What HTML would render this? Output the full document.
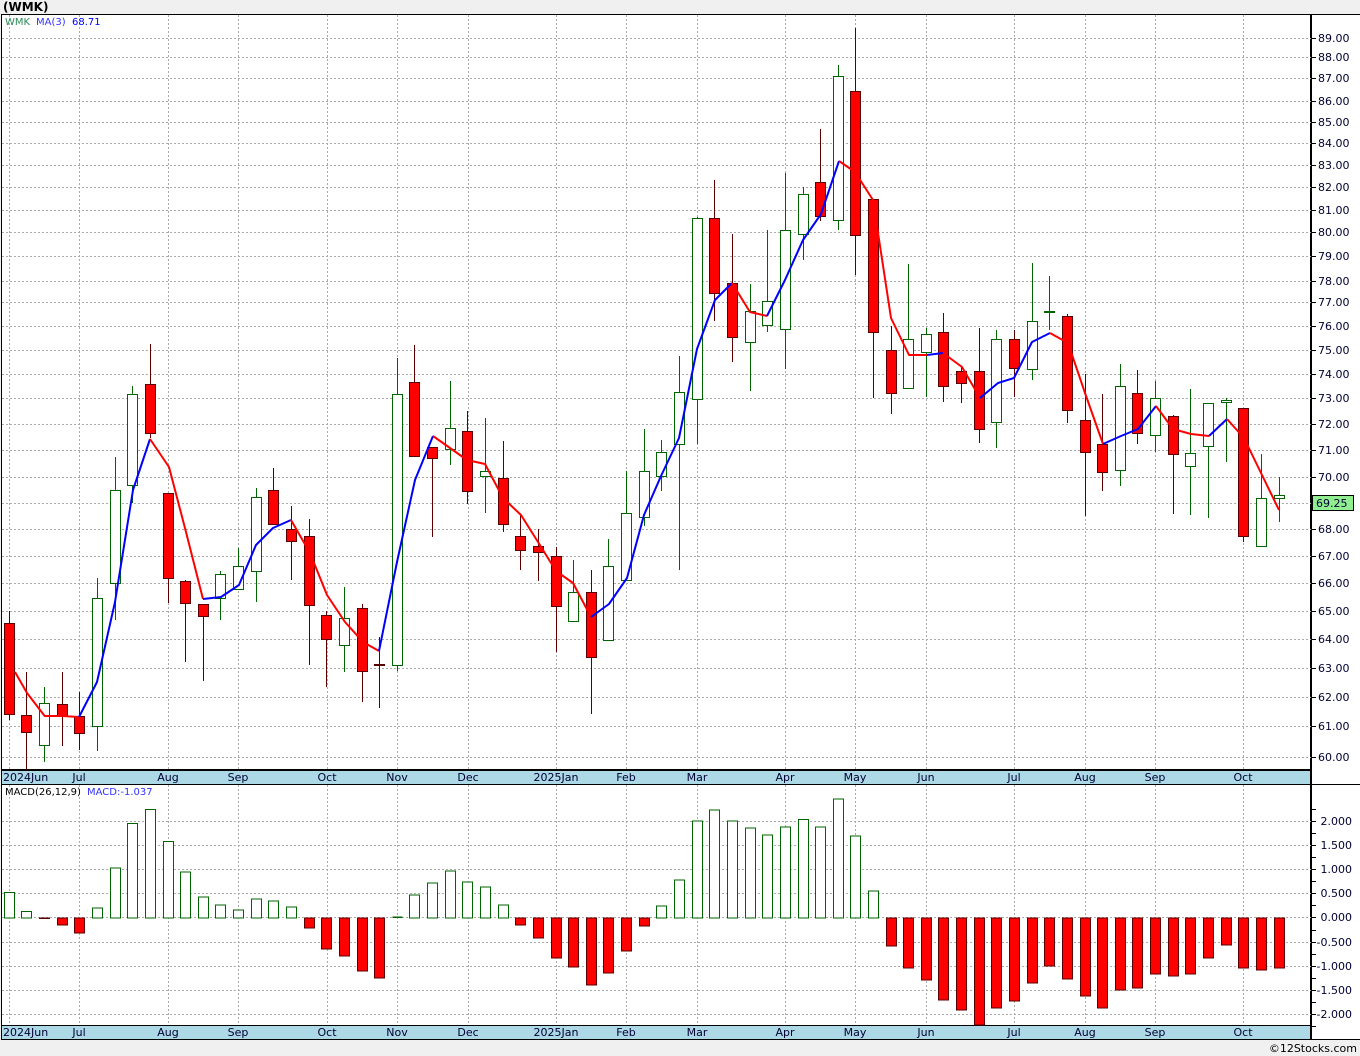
<!DOCTYPE html>
<html><head><meta charset="utf-8"><style>
html,body{margin:0;padding:0;background:#f0f0f0;}
svg{display:block;font-family:"DejaVu Sans","Liberation Sans",sans-serif;}
.ax{font-size:11px;fill:#000033;}
.gr{stroke:#aaa;stroke-width:1;stroke-dasharray:2,2;}
.r{fill:#ff0000;stroke:#5a0000;}
.g{fill:#fff;stroke:#006400;}
.wr{stroke:#5a0000;}
.wg{stroke:#006400;}
</style></head><body>
<svg width="1360" height="1056" viewBox="0 0 1360 1056" xmlns="http://www.w3.org/2000/svg">
<rect x="0" y="0" width="1360" height="1056" fill="#f0f0f0"/>
<text x="3" y="11" font-size="12" font-weight="bold" fill="#000">(WMK)</text>
<rect x="1.5" y="14.5" width="1309" height="755" fill="#fff" stroke="#000"/>
<rect x="1311" y="14.5" width="49" height="1025" fill="#fff"/>
<line x1="1311.5" y1="14" x2="1311.5" y2="1040" stroke="#000"/>
<line x1="1311" y1="14.5" x2="1360" y2="14.5" stroke="#000"/>
<g class="gr">
<line x1="2" y1="38.5" x2="1311" y2="38.5"/><line x1="2" y1="57.5" x2="1311" y2="57.5"/><line x1="2" y1="78.5" x2="1311" y2="78.5"/><line x1="2" y1="101.5" x2="1311" y2="101.5"/><line x1="2" y1="122.5" x2="1311" y2="122.5"/><line x1="2" y1="143.5" x2="1311" y2="143.5"/><line x1="2" y1="165.5" x2="1311" y2="165.5"/><line x1="2" y1="187.5" x2="1311" y2="187.5"/><line x1="2" y1="210.5" x2="1311" y2="210.5"/><line x1="2" y1="232.5" x2="1311" y2="232.5"/><line x1="2" y1="256.5" x2="1311" y2="256.5"/><line x1="2" y1="281.5" x2="1311" y2="281.5"/><line x1="2" y1="302.5" x2="1311" y2="302.5"/><line x1="2" y1="326.5" x2="1311" y2="326.5"/><line x1="2" y1="350.5" x2="1311" y2="350.5"/><line x1="2" y1="374.5" x2="1311" y2="374.5"/><line x1="2" y1="398.5" x2="1311" y2="398.5"/><line x1="2" y1="424.5" x2="1311" y2="424.5"/><line x1="2" y1="450.5" x2="1311" y2="450.5"/><line x1="2" y1="477.5" x2="1311" y2="477.5"/><line x1="2" y1="503.5" x2="1311" y2="503.5"/><line x1="2" y1="529.5" x2="1311" y2="529.5"/><line x1="2" y1="556.5" x2="1311" y2="556.5"/><line x1="2" y1="583.5" x2="1311" y2="583.5"/><line x1="2" y1="611.5" x2="1311" y2="611.5"/><line x1="2" y1="639.5" x2="1311" y2="639.5"/><line x1="2" y1="668.5" x2="1311" y2="668.5"/><line x1="2" y1="697.5" x2="1311" y2="697.5"/><line x1="2" y1="726.5" x2="1311" y2="726.5"/><line x1="2" y1="757.5" x2="1311" y2="757.5"/>
<line x1="9.5" y1="15" x2="9.5" y2="770"/><line x1="79.5" y1="15" x2="79.5" y2="770"/><line x1="168.5" y1="15" x2="168.5" y2="770"/><line x1="238.5" y1="15" x2="238.5" y2="770"/><line x1="327.5" y1="15" x2="327.5" y2="770"/><line x1="397.5" y1="15" x2="397.5" y2="770"/><line x1="468.5" y1="15" x2="468.5" y2="770"/><line x1="556.5" y1="15" x2="556.5" y2="770"/><line x1="626.5" y1="15" x2="626.5" y2="770"/><line x1="697.5" y1="15" x2="697.5" y2="770"/><line x1="785.5" y1="15" x2="785.5" y2="770"/><line x1="855.5" y1="15" x2="855.5" y2="770"/><line x1="926.5" y1="15" x2="926.5" y2="770"/><line x1="1014.5" y1="15" x2="1014.5" y2="770"/><line x1="1085.5" y1="15" x2="1085.5" y2="770"/><line x1="1155.5" y1="15" x2="1155.5" y2="770"/><line x1="1243.5" y1="15" x2="1243.5" y2="770"/>
</g>
<text x="5" y="25" font-size="10" fill="#2e8b57">WMK</text>
<text x="36" y="25" font-size="10" fill="#3333ff">MA(3)</text>
<text x="72" y="25" font-size="10" fill="#0000ff">68.71</text>
<g stroke="#000"><line x1="1311" y1="38.5" x2="1316" y2="38.5"/><line x1="1311" y1="57.5" x2="1316" y2="57.5"/><line x1="1311" y1="78.5" x2="1316" y2="78.5"/><line x1="1311" y1="101.5" x2="1316" y2="101.5"/><line x1="1311" y1="122.5" x2="1316" y2="122.5"/><line x1="1311" y1="143.5" x2="1316" y2="143.5"/><line x1="1311" y1="165.5" x2="1316" y2="165.5"/><line x1="1311" y1="187.5" x2="1316" y2="187.5"/><line x1="1311" y1="210.5" x2="1316" y2="210.5"/><line x1="1311" y1="232.5" x2="1316" y2="232.5"/><line x1="1311" y1="256.5" x2="1316" y2="256.5"/><line x1="1311" y1="281.5" x2="1316" y2="281.5"/><line x1="1311" y1="302.5" x2="1316" y2="302.5"/><line x1="1311" y1="326.5" x2="1316" y2="326.5"/><line x1="1311" y1="350.5" x2="1316" y2="350.5"/><line x1="1311" y1="374.5" x2="1316" y2="374.5"/><line x1="1311" y1="398.5" x2="1316" y2="398.5"/><line x1="1311" y1="424.5" x2="1316" y2="424.5"/><line x1="1311" y1="450.5" x2="1316" y2="450.5"/><line x1="1311" y1="477.5" x2="1316" y2="477.5"/><line x1="1311" y1="529.5" x2="1316" y2="529.5"/><line x1="1311" y1="556.5" x2="1316" y2="556.5"/><line x1="1311" y1="583.5" x2="1316" y2="583.5"/><line x1="1311" y1="611.5" x2="1316" y2="611.5"/><line x1="1311" y1="639.5" x2="1316" y2="639.5"/><line x1="1311" y1="668.5" x2="1316" y2="668.5"/><line x1="1311" y1="697.5" x2="1316" y2="697.5"/><line x1="1311" y1="726.5" x2="1316" y2="726.5"/><line x1="1311" y1="757.5" x2="1316" y2="757.5"/></g>
<g class="ax">
<text x="1318" y="42">89.00</text><text x="1318" y="61">88.00</text><text x="1318" y="82">87.00</text><text x="1318" y="105">86.00</text><text x="1318" y="126">85.00</text><text x="1318" y="147">84.00</text><text x="1318" y="169">83.00</text><text x="1318" y="191">82.00</text><text x="1318" y="214">81.00</text><text x="1318" y="236">80.00</text><text x="1318" y="260">79.00</text><text x="1318" y="285">78.00</text><text x="1318" y="306">77.00</text><text x="1318" y="330">76.00</text><text x="1318" y="354">75.00</text><text x="1318" y="378">74.00</text><text x="1318" y="402">73.00</text><text x="1318" y="428">72.00</text><text x="1318" y="454">71.00</text><text x="1318" y="481">70.00</text><text x="1318" y="533">68.00</text><text x="1318" y="560">67.00</text><text x="1318" y="587">66.00</text><text x="1318" y="615">65.00</text><text x="1318" y="643">64.00</text><text x="1318" y="672">63.00</text><text x="1318" y="701">62.00</text><text x="1318" y="730">61.00</text><text x="1318" y="761">60.00</text>
</g>
<rect x="1312.5" y="495.5" width="41" height="15" fill="#90ee90" stroke="#000"/>
<text x="1316" y="507" class="ax">69.25</text>
<g stroke-width="1">
<line class="wr" x1="9.5" y1="611" x2="9.5" y2="720"/><rect class="r" x="4.5" y="623.5" width="10" height="91"/>
<line class="wr" x1="26.5" y1="672" x2="26.5" y2="770"/><rect class="r" x="21.5" y="715.5" width="10" height="17"/>
<line class="wg" x1="44.5" y1="687" x2="44.5" y2="762"/><rect class="g" x="39.5" y="703.5" width="10" height="42"/>
<line class="wr" x1="62.5" y1="672" x2="62.5" y2="746"/><rect class="r" x="57.5" y="704.5" width="10" height="12"/>
<line class="wr" x1="79.5" y1="692" x2="79.5" y2="750"/><rect class="r" x="74.5" y="716.5" width="10" height="17"/>
<line class="wg" x1="97.5" y1="578" x2="97.5" y2="751"/><rect class="g" x="92.5" y="598.5" width="10" height="128"/>
<line class="wg" x1="115.5" y1="457" x2="115.5" y2="620"/><rect class="g" x="110.5" y="490.5" width="10" height="93"/>
<line class="wg" x1="132.5" y1="386" x2="132.5" y2="503"/><rect class="g" x="127.5" y="394.5" width="10" height="91"/>
<line class="wr" x1="150.5" y1="344" x2="150.5" y2="438"/><rect class="r" x="145.5" y="384.5" width="10" height="49"/>
<line class="wr" x1="168.5" y1="493" x2="168.5" y2="603"/><rect class="r" x="163.5" y="493.5" width="10" height="85"/>
<line class="wr" x1="185.5" y1="580" x2="185.5" y2="662"/><rect class="r" x="180.5" y="581.5" width="10" height="22"/>
<line class="wr" x1="203.5" y1="604" x2="203.5" y2="681"/><rect class="r" x="198.5" y="604.5" width="10" height="12"/>
<line class="wg" x1="220.5" y1="571" x2="220.5" y2="620"/><rect class="g" x="215.5" y="574.5" width="10" height="24"/>
<line class="wg" x1="238.5" y1="548" x2="238.5" y2="589"/><rect class="g" x="233.5" y="566.5" width="10" height="23"/>
<line class="wg" x1="256.5" y1="488" x2="256.5" y2="602"/><rect class="g" x="251.5" y="497.5" width="10" height="74"/>
<line class="wr" x1="273.5" y1="468" x2="273.5" y2="524"/><rect class="r" x="268.5" y="490.5" width="10" height="34"/>
<line class="wr" x1="291.5" y1="506" x2="291.5" y2="580"/><rect class="r" x="286.5" y="529.5" width="10" height="12"/>
<line class="wr" x1="309.5" y1="519" x2="309.5" y2="665"/><rect class="r" x="304.5" y="536.5" width="10" height="69"/>
<line class="wr" x1="326.5" y1="611" x2="326.5" y2="687"/><rect class="r" x="321.5" y="615.5" width="10" height="24"/>
<line class="wg" x1="344.5" y1="587" x2="344.5" y2="672"/><rect class="g" x="339.5" y="618.5" width="10" height="27"/>
<line class="wr" x1="362.5" y1="604" x2="362.5" y2="702"/><rect class="r" x="357.5" y="608.5" width="10" height="63"/>
<line class="wr" x1="379.5" y1="637" x2="379.5" y2="708"/><rect class="r" x="374.5" y="664.5" width="10" height="1"/>
<line class="wg" x1="397.5" y1="358" x2="397.5" y2="671"/><rect class="g" x="392.5" y="394.5" width="10" height="271"/>
<line class="wr" x1="414.5" y1="345" x2="414.5" y2="456"/><rect class="r" x="409.5" y="382.5" width="10" height="74"/>
<line class="wr" x1="432.5" y1="447" x2="432.5" y2="537"/><rect class="r" x="427.5" y="447.5" width="10" height="11"/>
<line class="wg" x1="450.5" y1="381" x2="450.5" y2="465"/><rect class="g" x="445.5" y="428.5" width="10" height="21"/>
<line class="wr" x1="467.5" y1="411" x2="467.5" y2="504"/><rect class="r" x="462.5" y="431.5" width="10" height="60"/>
<line class="wg" x1="485.5" y1="418" x2="485.5" y2="513"/><rect class="g" x="480.5" y="471.5" width="10" height="5"/>
<line class="wr" x1="503.5" y1="441" x2="503.5" y2="532"/><rect class="r" x="498.5" y="478.5" width="10" height="46"/>
<line class="wr" x1="520.5" y1="515" x2="520.5" y2="570"/><rect class="r" x="515.5" y="536.5" width="10" height="14"/>
<line class="wr" x1="538.5" y1="529" x2="538.5" y2="581"/><rect class="r" x="533.5" y="546.5" width="10" height="6"/>
<line class="wr" x1="556.5" y1="547" x2="556.5" y2="652"/><rect class="r" x="551.5" y="556.5" width="10" height="50"/>
<line class="wg" x1="573.5" y1="560" x2="573.5" y2="621"/><rect class="g" x="568.5" y="592.5" width="10" height="29"/>
<line class="wr" x1="591.5" y1="570" x2="591.5" y2="714"/><rect class="r" x="586.5" y="592.5" width="10" height="65"/>
<line class="wg" x1="608.5" y1="539" x2="608.5" y2="640"/><rect class="g" x="603.5" y="566.5" width="10" height="74"/>
<line class="wg" x1="626.5" y1="471" x2="626.5" y2="580"/><rect class="g" x="621.5" y="513.5" width="10" height="67"/>
<line class="wg" x1="644.5" y1="429" x2="644.5" y2="526"/><rect class="g" x="639.5" y="471.5" width="10" height="46"/>
<line class="wg" x1="661.5" y1="440" x2="661.5" y2="491"/><rect class="g" x="656.5" y="452.5" width="10" height="24"/>
<line class="wg" x1="679.5" y1="356" x2="679.5" y2="570"/><rect class="g" x="674.5" y="392.5" width="10" height="52"/>
<line class="wg" x1="697.5" y1="217" x2="697.5" y2="444"/><rect class="g" x="692.5" y="218.5" width="10" height="181"/>
<line class="wr" x1="714.5" y1="180" x2="714.5" y2="321"/><rect class="r" x="709.5" y="218.5" width="10" height="75"/>
<line class="wr" x1="732.5" y1="234" x2="732.5" y2="362"/><rect class="r" x="727.5" y="283.5" width="10" height="54"/>
<line class="wg" x1="750.5" y1="284" x2="750.5" y2="391"/><rect class="g" x="745.5" y="311.5" width="10" height="31"/>
<line class="wg" x1="767.5" y1="230" x2="767.5" y2="332"/><rect class="g" x="762.5" y="301.5" width="10" height="24"/>
<line class="wg" x1="785.5" y1="173" x2="785.5" y2="369"/><rect class="g" x="780.5" y="230.5" width="10" height="99"/>
<line class="wg" x1="803.5" y1="187" x2="803.5" y2="260"/><rect class="g" x="798.5" y="194.5" width="10" height="40"/>
<line class="wr" x1="820.5" y1="129" x2="820.5" y2="221"/><rect class="r" x="815.5" y="182.5" width="10" height="34"/>
<line class="wg" x1="838.5" y1="65" x2="838.5" y2="230"/><rect class="g" x="833.5" y="76.5" width="10" height="144"/>
<line class="wr" x1="855.5" y1="28" x2="855.5" y2="275"/><rect class="r" x="850.5" y="91.5" width="10" height="144"/>
<line class="wr" x1="873.5" y1="199" x2="873.5" y2="398"/><rect class="r" x="868.5" y="199.5" width="10" height="133"/>
<line class="wr" x1="891.5" y1="326" x2="891.5" y2="414"/><rect class="r" x="886.5" y="350.5" width="10" height="43"/>
<line class="wg" x1="908.5" y1="264" x2="908.5" y2="388"/><rect class="g" x="903.5" y="339.5" width="10" height="49"/>
<line class="wg" x1="926.5" y1="328" x2="926.5" y2="397"/><rect class="g" x="921.5" y="334.5" width="10" height="18"/>
<line class="wr" x1="943.5" y1="313" x2="943.5" y2="402"/><rect class="r" x="938.5" y="332.5" width="10" height="54"/>
<line class="wr" x1="961.5" y1="366" x2="961.5" y2="403"/><rect class="r" x="956.5" y="371.5" width="10" height="12"/>
<line class="wr" x1="979.5" y1="328" x2="979.5" y2="443"/><rect class="r" x="974.5" y="371.5" width="10" height="58"/>
<line class="wg" x1="996.5" y1="330" x2="996.5" y2="448"/><rect class="g" x="991.5" y="339.5" width="10" height="83"/>
<line class="wr" x1="1014.5" y1="330" x2="1014.5" y2="397"/><rect class="r" x="1009.5" y="339.5" width="10" height="29"/>
<line class="wg" x1="1032.5" y1="263" x2="1032.5" y2="380"/><rect class="g" x="1027.5" y="321.5" width="10" height="48"/>
<line class="wg" x1="1049.5" y1="276" x2="1049.5" y2="330"/><rect class="g" x="1044.5" y="311.5" width="10" height="1"/>
<line class="wr" x1="1067.5" y1="314" x2="1067.5" y2="423"/><rect class="r" x="1062.5" y="316.5" width="10" height="94"/>
<line class="wr" x1="1085.5" y1="374" x2="1085.5" y2="516"/><rect class="r" x="1080.5" y="420.5" width="10" height="32"/>
<line class="wr" x1="1102.5" y1="394" x2="1102.5" y2="491"/><rect class="r" x="1097.5" y="444.5" width="10" height="28"/>
<line class="wg" x1="1120.5" y1="364" x2="1120.5" y2="486"/><rect class="g" x="1115.5" y="386.5" width="10" height="84"/>
<line class="wr" x1="1137.5" y1="370" x2="1137.5" y2="444"/><rect class="r" x="1132.5" y="393.5" width="10" height="40"/>
<line class="wg" x1="1155.5" y1="381" x2="1155.5" y2="452"/><rect class="g" x="1150.5" y="398.5" width="10" height="37"/>
<line class="wr" x1="1173.5" y1="415" x2="1173.5" y2="514"/><rect class="r" x="1168.5" y="416.5" width="10" height="38"/>
<line class="wg" x1="1190.5" y1="389" x2="1190.5" y2="515"/><rect class="g" x="1185.5" y="453.5" width="10" height="13"/>
<line class="wg" x1="1208.5" y1="403" x2="1208.5" y2="518"/><rect class="g" x="1203.5" y="403.5" width="10" height="43"/>
<line class="wg" x1="1226.5" y1="398" x2="1226.5" y2="462"/><rect class="g" x="1221.5" y="400.5" width="10" height="2"/>
<line class="wr" x1="1243.5" y1="408" x2="1243.5" y2="542"/><rect class="r" x="1238.5" y="408.5" width="10" height="128"/>
<line class="wg" x1="1261.5" y1="454" x2="1261.5" y2="546"/><rect class="g" x="1256.5" y="498.5" width="10" height="48"/>
<line class="wg" x1="1279.5" y1="477" x2="1279.5" y2="522"/><rect class="g" x="1274.5" y="495.5" width="10" height="3"/>
</g>
<g fill="none" stroke-width="2" stroke-linejoin="round">
<polyline stroke="#ff0000" points="15,672 27,693 44.7,716 62,716 79,717"/>
<polyline stroke="#0000ff" points="79,717 97,682 115,602 133,490 150,439"/>
<polyline stroke="#ff0000" points="150,439 169,467 186,532 203,599"/>
<polyline stroke="#0000ff" points="203,599 221,597 239,585 256,545 273,528 291,520"/>
<polyline stroke="#ff0000" points="291,520 310,553 327,595 345,622 363,642 379,651"/>
<polyline stroke="#0000ff" points="379,651 397,562 415,480 433,436"/>
<polyline stroke="#ff0000" points="433,436 450,448 467,460 485,464 503,498 521,515 538,542 556,571 573,583 591,617"/>
<polyline stroke="#0000ff" points="591,617 609,604 627,578 644,515 661,476 679,438 697,349 715,300 732,283"/>
<polyline stroke="#ff0000" points="732,283 750,312 767,316"/>
<polyline stroke="#0000ff" points="767,316 785,280 803,240 821,214 839,161"/>
<polyline stroke="#ff0000" points="839,161 855,172 873,200 891,318 909,355 927,355"/>
<polyline stroke="#0000ff" points="927,355 943,353"/>
<polyline stroke="#ff0000" points="943,353 962,367 980,398"/>
<polyline stroke="#0000ff" points="980,398 998,383 1014,378 1032,342 1050,333"/>
<polyline stroke="#ff0000" points="1050,333 1068,343 1085,393 1103,444"/>
<polyline stroke="#0000ff" points="1103,444 1121,436 1138,429 1156,406"/>
<polyline stroke="#ff0000" points="1156,406 1173,429 1191,434 1209,436"/>
<polyline stroke="#0000ff" points="1209,436 1227,419"/>
<polyline stroke="#ff0000" points="1227,419 1244,438 1262,475 1279,510"/>
</g>
<rect x="1.5" y="770.5" width="1309" height="14" fill="#add8e6" stroke="#000"/>
<rect x="1.5" y="1025.5" width="1309" height="14" fill="#add8e6" stroke="#000"/>
<g class="ax">
<text x="3" y="781">2024Jun</text><text x="79" y="781" text-anchor="middle">Jul</text><text x="168" y="781" text-anchor="middle">Aug</text><text x="238" y="781" text-anchor="middle">Sep</text><text x="327" y="781" text-anchor="middle">Oct</text><text x="397" y="781" text-anchor="middle">Nov</text><text x="468" y="781" text-anchor="middle">Dec</text><text x="556" y="781" text-anchor="middle">2025Jan</text><text x="626" y="781" text-anchor="middle">Feb</text><text x="697" y="781" text-anchor="middle">Mar</text><text x="785" y="781" text-anchor="middle">Apr</text><text x="855" y="781" text-anchor="middle">May</text><text x="926" y="781" text-anchor="middle">Jun</text><text x="1014" y="781" text-anchor="middle">Jul</text><text x="1085" y="781" text-anchor="middle">Aug</text><text x="1155" y="781" text-anchor="middle">Sep</text><text x="1243" y="781" text-anchor="middle">Oct</text>
<text x="3" y="1036">2024Jun</text><text x="79" y="1036" text-anchor="middle">Jul</text><text x="168" y="1036" text-anchor="middle">Aug</text><text x="238" y="1036" text-anchor="middle">Sep</text><text x="327" y="1036" text-anchor="middle">Oct</text><text x="397" y="1036" text-anchor="middle">Nov</text><text x="468" y="1036" text-anchor="middle">Dec</text><text x="556" y="1036" text-anchor="middle">2025Jan</text><text x="626" y="1036" text-anchor="middle">Feb</text><text x="697" y="1036" text-anchor="middle">Mar</text><text x="785" y="1036" text-anchor="middle">Apr</text><text x="855" y="1036" text-anchor="middle">May</text><text x="926" y="1036" text-anchor="middle">Jun</text><text x="1014" y="1036" text-anchor="middle">Jul</text><text x="1085" y="1036" text-anchor="middle">Aug</text><text x="1155" y="1036" text-anchor="middle">Sep</text><text x="1243" y="1036" text-anchor="middle">Oct</text>
</g>
<rect x="1.5" y="784.5" width="1309" height="241" fill="#fff" stroke="#000"/>
<line x1="1311" y1="784.5" x2="1360" y2="784.5" stroke="#000"/>
<g class="gr">
<line x1="2" y1="821.5" x2="1311" y2="821.5"/><line x1="2" y1="845.5" x2="1311" y2="845.5"/><line x1="2" y1="869.5" x2="1311" y2="869.5"/><line x1="2" y1="893.5" x2="1311" y2="893.5"/><line x1="2" y1="917.5" x2="1311" y2="917.5"/><line x1="2" y1="942.5" x2="1311" y2="942.5"/><line x1="2" y1="966.5" x2="1311" y2="966.5"/><line x1="2" y1="990.5" x2="1311" y2="990.5"/><line x1="2" y1="1014.5" x2="1311" y2="1014.5"/>
<line x1="9.5" y1="785" x2="9.5" y2="1025"/><line x1="79.5" y1="785" x2="79.5" y2="1025"/><line x1="168.5" y1="785" x2="168.5" y2="1025"/><line x1="238.5" y1="785" x2="238.5" y2="1025"/><line x1="327.5" y1="785" x2="327.5" y2="1025"/><line x1="397.5" y1="785" x2="397.5" y2="1025"/><line x1="468.5" y1="785" x2="468.5" y2="1025"/><line x1="556.5" y1="785" x2="556.5" y2="1025"/><line x1="626.5" y1="785" x2="626.5" y2="1025"/><line x1="697.5" y1="785" x2="697.5" y2="1025"/><line x1="785.5" y1="785" x2="785.5" y2="1025"/><line x1="855.5" y1="785" x2="855.5" y2="1025"/><line x1="926.5" y1="785" x2="926.5" y2="1025"/><line x1="1014.5" y1="785" x2="1014.5" y2="1025"/><line x1="1085.5" y1="785" x2="1085.5" y2="1025"/><line x1="1155.5" y1="785" x2="1155.5" y2="1025"/><line x1="1243.5" y1="785" x2="1243.5" y2="1025"/>
</g>
<text x="5" y="795" font-size="10" fill="#000">MACD(26,12,9)</text>
<text x="87" y="795" font-size="10" fill="#3333ff">MACD:-1.037</text>
<g stroke="#000"><line x1="1311" y1="809.5" x2="1316" y2="809.5"/><line x1="1311" y1="821.5" x2="1316" y2="821.5"/><line x1="1311" y1="833.5" x2="1316" y2="833.5"/><line x1="1311" y1="845.5" x2="1316" y2="845.5"/><line x1="1311" y1="857.5" x2="1316" y2="857.5"/><line x1="1311" y1="869.5" x2="1316" y2="869.5"/><line x1="1311" y1="881.5" x2="1316" y2="881.5"/><line x1="1311" y1="893.5" x2="1316" y2="893.5"/><line x1="1311" y1="905.5" x2="1316" y2="905.5"/><line x1="1311" y1="917.5" x2="1316" y2="917.5"/><line x1="1311" y1="930.5" x2="1316" y2="930.5"/><line x1="1311" y1="942.5" x2="1316" y2="942.5"/><line x1="1311" y1="954.5" x2="1316" y2="954.5"/><line x1="1311" y1="966.5" x2="1316" y2="966.5"/><line x1="1311" y1="978.5" x2="1316" y2="978.5"/><line x1="1311" y1="990.5" x2="1316" y2="990.5"/><line x1="1311" y1="1002.5" x2="1316" y2="1002.5"/><line x1="1311" y1="1014.5" x2="1316" y2="1014.5"/><line x1="1311" y1="1026.5" x2="1316" y2="1026.5"/></g>
<g class="ax" text-anchor="end">
<text x="1352" y="825">2.000</text><text x="1352" y="849">1.500</text><text x="1352" y="873">1.000</text><text x="1352" y="897">0.500</text><text x="1352" y="921">0.000</text><text x="1352" y="946">-0.500</text><text x="1352" y="970">-1.000</text><text x="1352" y="994">-1.500</text><text x="1352" y="1018">-2.000</text>
</g>
<g>
<rect class="g" x="4.5" y="892.5" width="10" height="25.5"/>
<rect class="g" x="21.5" y="911.5" width="10" height="6.5"/>
<rect class="r" x="39.5" y="918" width="10" height="0.5"/>
<rect class="r" x="57.5" y="918" width="10" height="7"/>
<rect class="r" x="74.5" y="918" width="10" height="15"/>
<rect class="g" x="92.5" y="908" width="10" height="10"/>
<rect class="g" x="110.5" y="868" width="10" height="50"/>
<rect class="g" x="127.5" y="823.5" width="10" height="94.5"/>
<rect class="g" x="145.5" y="809.5" width="10" height="108.5"/>
<rect class="g" x="163.5" y="841.5" width="10" height="76.5"/>
<rect class="g" x="180.5" y="872" width="10" height="46"/>
<rect class="g" x="198.5" y="897" width="10" height="21"/>
<rect class="g" x="215.5" y="905" width="10" height="13"/>
<rect class="g" x="233.5" y="910" width="10" height="8"/>
<rect class="g" x="251.5" y="899" width="10" height="19"/>
<rect class="g" x="268.5" y="901" width="10" height="17"/>
<rect class="g" x="286.5" y="907" width="10" height="11"/>
<rect class="r" x="304.5" y="918" width="10" height="10"/>
<rect class="r" x="321.5" y="918" width="10" height="31"/>
<rect class="r" x="339.5" y="918" width="10" height="38"/>
<rect class="r" x="357.5" y="918" width="10" height="53"/>
<rect class="r" x="374.5" y="918" width="10" height="60"/>
<rect x="392.5" y="916.5" width="10" height="1.5" fill="#006400"/>
<rect class="g" x="409.5" y="895" width="10" height="23"/>
<rect class="g" x="427.5" y="883" width="10" height="35"/>
<rect class="g" x="445.5" y="871" width="10" height="47"/>
<rect class="g" x="462.5" y="882" width="10" height="36"/>
<rect class="g" x="480.5" y="887" width="10" height="31"/>
<rect class="g" x="498.5" y="905" width="10" height="13"/>
<rect class="r" x="515.5" y="918" width="10" height="7"/>
<rect class="r" x="533.5" y="918" width="10" height="20"/>
<rect class="r" x="551.5" y="918" width="10" height="40"/>
<rect class="r" x="568.5" y="918" width="10" height="49"/>
<rect class="r" x="586.5" y="918" width="10" height="67"/>
<rect class="r" x="603.5" y="918" width="10" height="55"/>
<rect class="r" x="621.5" y="918" width="10" height="33"/>
<rect class="r" x="639.5" y="918" width="10" height="8"/>
<rect class="g" x="656.5" y="906" width="10" height="12"/>
<rect class="g" x="674.5" y="880" width="10" height="38"/>
<rect class="g" x="692.5" y="821" width="10" height="97"/>
<rect class="g" x="709.5" y="810" width="10" height="108"/>
<rect class="g" x="727.5" y="821" width="10" height="97"/>
<rect class="g" x="745.5" y="828" width="10" height="90"/>
<rect class="g" x="762.5" y="835" width="10" height="83"/>
<rect class="g" x="780.5" y="827" width="10" height="91"/>
<rect class="g" x="798.5" y="819.5" width="10" height="98.5"/>
<rect class="g" x="815.5" y="827" width="10" height="91"/>
<rect class="g" x="833.5" y="799" width="10" height="119"/>
<rect class="g" x="850.5" y="836" width="10" height="82"/>
<rect class="g" x="868.5" y="891" width="10" height="27"/>
<rect class="r" x="886.5" y="918" width="10" height="28"/>
<rect class="r" x="903.5" y="918" width="10" height="50"/>
<rect class="r" x="921.5" y="918" width="10" height="62"/>
<rect class="r" x="938.5" y="918" width="10" height="82"/>
<rect class="r" x="956.5" y="918" width="10" height="92"/>
<rect class="r" x="974.5" y="918" width="10" height="107"/>
<rect class="r" x="991.5" y="918" width="10" height="90"/>
<rect class="r" x="1009.5" y="918" width="10" height="83"/>
<rect class="r" x="1027.5" y="918" width="10" height="65"/>
<rect class="r" x="1044.5" y="918" width="10" height="48"/>
<rect class="r" x="1062.5" y="918" width="10" height="61"/>
<rect class="r" x="1080.5" y="918" width="10" height="78"/>
<rect class="r" x="1097.5" y="918" width="10" height="90"/>
<rect class="r" x="1115.5" y="918" width="10" height="72"/>
<rect class="r" x="1132.5" y="918" width="10" height="70"/>
<rect class="r" x="1150.5" y="918" width="10" height="56"/>
<rect class="r" x="1168.5" y="918" width="10" height="58"/>
<rect class="r" x="1185.5" y="918" width="10" height="56"/>
<rect class="r" x="1203.5" y="918" width="10" height="40"/>
<rect class="r" x="1221.5" y="918" width="10" height="27"/>
<rect class="r" x="1238.5" y="918" width="10" height="50"/>
<rect class="r" x="1256.5" y="918" width="10" height="52"/>
<rect class="r" x="1274.5" y="918" width="10" height="50"/>
</g>
<line x1="1311" y1="1039.5" x2="1360" y2="1039.5" stroke="#000"/>
<text x="1357" y="1052" font-size="11" fill="#000" text-anchor="end">©12Stocks.com</text>
</svg>
</body></html>
